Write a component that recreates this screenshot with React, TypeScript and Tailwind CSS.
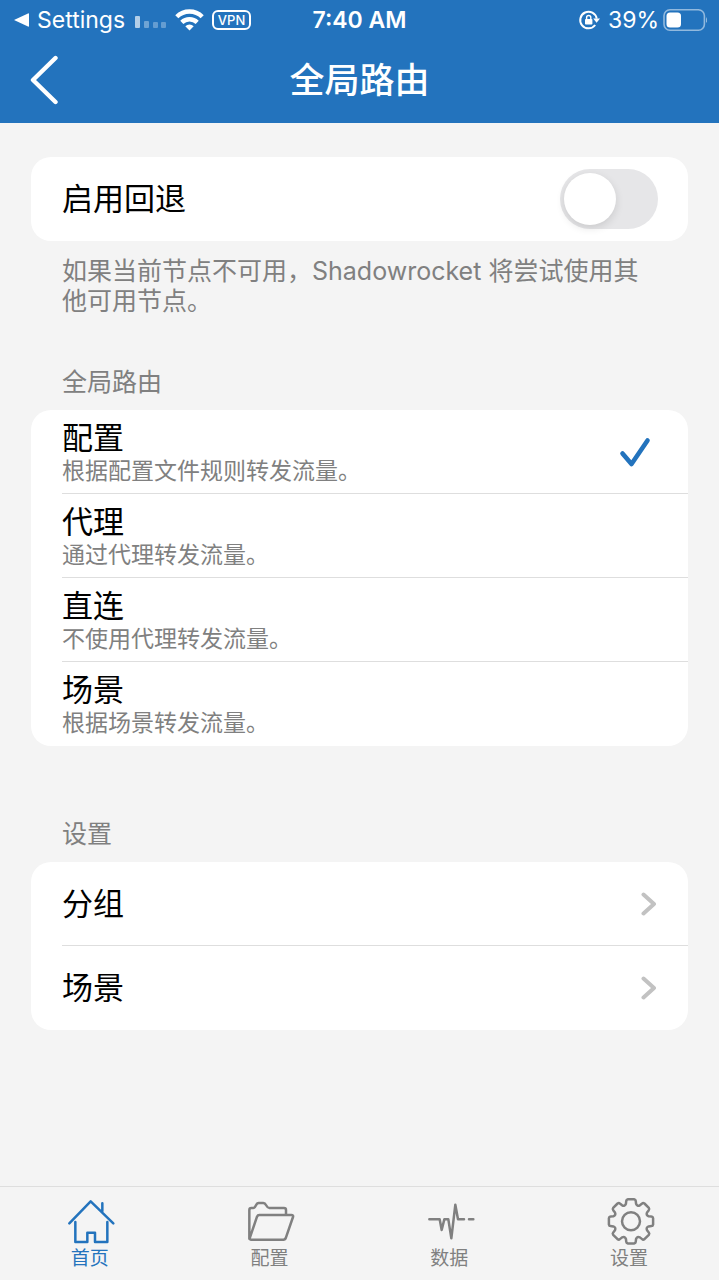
import { useState } from "react";

const MODES = [
	{ id: "config", nombre: "配置", detalle: "根据配置文件规则转发流量。" },
	{ id: "proxy", nombre: "代理", detalle: "通过代理转发流量。" },
	{ id: "direct", nombre: "直连", detalle: "不使用代理转发流量。" },
	{ id: "scene", nombre: "场景", detalle: "根据场景转发流量。" }
];

const LINKS = ["分组", "场景"];

// eight teeth, each a trapezoid with a rounded valley between two of them
function gearPath() {
	const pt = (r: number, deg: number) => {
		const a = (deg * Math.PI) / 180;
		return `${(78 + r * Math.cos(a)).toFixed(1)} ${(76 + r * Math.sin(a)).toFixed(1)}`;
	};
	let d = `M${pt(55, -16)}`;
	for (let i = 0; i < 8; i++) {
		const c = i * 45;
		d += `L${pt(63, c - 13)}Q${pt(67, c - 12)} ${pt(67, c - 8)}L${pt(67, c + 8)}Q${pt(67, c + 12)} ${pt(63, c + 13)}`;
		d += `L${pt(55, c + 16)}Q${pt(48, c + 22.5)} ${pt(55, c + 29)}`;
	}
	return d + "Z";
}

const TABS = [
	{ nombre: "首页", d: "M10 82L74 16L142 82M109 22V46M28 78V138H64V110H87V138H124V78" },
	{
		nombre: "配置",
		d: "M10 128V42Q10 36 16 36H22C31 36 28 21 38 21H52C62 21 60 36 70 36H114Q120 36 120 42V56M40 57H136Q143 57 141 63L120 124Q118 131 112 131H16Q10 131 12 124L33 62Q35 57 40 57Z"
	},
	{ nombre: "数据", d: "M13 70H44L50 102L58 70H70L79 127L91 26L99 70H117M132 70H145" },
	{ nombre: "设置", d: gearPath() + "M105 76A27 27 0 1 1 51 76A27 27 0 1 1 105 76Z" }
];

function StatusBar() {
	return (
		<div className="grid h-10 grid-cols-[1fr_auto_1fr] items-center px-3 text-[23px] leading-[30px]">
			<div className="flex items-center">
				<svg className="mr-2 h-[14px] w-[17px]" viewBox="0 0 17 14" fill="currentColor">
					<path d="M2 7L16 0.4Q17 0 17 1V13Q17 14 16 13.6Z" />
				</svg>
				<span>Settings</span>
				<svg className="ml-[10px] h-[22px] w-8" viewBox="0 0 32 22" fill="currentColor">
					<rect x="0" y="7" width="5" height="12" rx="1" opacity="0.65" />
					<rect x="9" y="12" width="5" height="7" rx="1" opacity="0.35" />
					<rect x="18" y="13" width="5" height="6" rx="1" opacity="0.3" />
					<rect x="26" y="13" width="5" height="6" rx="1" opacity="0.3" />
				</svg>
				<svg className="ml-2 h-[22px] w-[29px]" viewBox="0 0 29 22" fill="none" stroke="currentColor" strokeWidth="4.4">
					<path d="M1.8 7.8A18 18 0 0 1 27.2 7.8" />
					<path d="M6.8 13.4A11 11 0 0 1 22.2 13.4" />
					<path d="M14.5 21.5L10.3 17.3A6 6 0 0 1 18.7 17.3Z" fill="currentColor" stroke="none" />
				</svg>
				<span className="ml-2 flex h-5 w-[39px] items-center justify-center rounded-[6px] border-2 border-current text-[13px] font-medium leading-none">
					VPN
				</span>
			</div>

			<span className="font-semibold">7:40 AM</span>

			<div className="flex items-center justify-end">
				<svg className="mr-2 h-[22px] w-[22px]" viewBox="0 0 22 22" fill="none" stroke="currentColor" strokeWidth="2">
					<path d="M17.2 16A8.3 8.3 0 1 1 18.7 9.6" />
					<path d="M15.2 9.6H22L18.6 13.8Z" fill="currentColor" stroke="none" />
					<rect x="7" y="10" width="7.4" height="5.6" rx="0.8" fill="currentColor" stroke="none" />
					<path d="M8.6 10.4V8.6A2.1 2.1 0 0 1 12.8 8.6V10.4" strokeWidth="1.4" />
				</svg>
				<span>39%</span>
				<svg className="ml-1 h-[22px] w-11" viewBox="0 0 44 22" fill="none">
					<rect x="1" y="0.8" width="40.4" height="20.4" rx="6" stroke="currentColor" strokeWidth="1.6" opacity="0.5" />
					<rect x="3.5" y="3.5" width="14.5" height="15" rx="3.5" fill="currentColor" />
					<path d="M43 8Q45.4 11 43 14Z" fill="currentColor" opacity="0.5" />
				</svg>
			</div>
		</div>
	);
}

export default function App() {
	const [fallback, setFallback] = useState(false);
	const [mode, setMode] = useState("config");
	const [tab, setTab] = useState("首页");

	return (
		<div lang="zh-CN" className="flex min-h-screen flex-col bg-[#f4f4f4] font-['Inter','Noto_Sans_CJK_SC',sans-serif] text-black">

			{/* HEADER */}
			<header className="bg-[#2373bd] text-white">
				<StatusBar />
				<div className="grid h-[83px] grid-cols-[1fr_auto_1fr] items-center pb-[3px]">
					<button type="button" aria-label="返回" className="ml-[28px] flex h-14 w-9 items-center">
						<svg className="h-[50px] w-8" viewBox="0 0 32 50" fill="none" stroke="currentColor" strokeWidth="4.4" strokeLinecap="round" strokeLinejoin="round">
							<path d="M27.5 3L5 25L27.5 47" />
						</svg>
					</button>
					<h1 className="text-[35px] font-medium leading-[42px]">全局路由</h1>
				</div>
			</header>

			<main className="flex-1 px-[31px] pt-[34px] pb-8">

				{/* FALLBACK */}
				<label className="flex h-[84px] items-center justify-between rounded-[20px] bg-white pl-[31px] pr-[30px] text-[31px] leading-[34px]">
					启用回退
					<input
						type="checkbox"
						role="switch"
						checked={fallback}
						onChange={(e) => setFallback(e.target.checked)}
						className="flex h-[60px] w-[98px] appearance-none items-center rounded-full bg-[#e6e6e8] px-1 before:h-[52px] before:w-[52px] before:rounded-full before:bg-white before:shadow-[0_3px_8px_rgba(0,0,0,0.12)] checked:justify-end checked:bg-[#34c759]"
					/>
				</label>
				<p className="mt-[15px] px-[31px] text-[25px] leading-[30px] text-[#808080]">
					如果当前节点不可用，Shadowrocket 将尝试使用其他可用节点。
				</p>

				{/* MODES */}
				<fieldset className="mt-[51px]">
					<legend className="mb-[13px] px-[31px] text-[25px] leading-[30px] text-[#808080]">全局路由</legend>
					<div className="overflow-hidden rounded-[20px] bg-white pl-[31px]">
						{MODES.map((m) => (
							<label
								key={m.id}
								className="relative flex h-[84px] items-center justify-between border-b border-[#dedede] pr-[37px] last:border-b-0"
							>
								<input
									type="radio"
									name="mode"
									className="sr-only"
									checked={mode === m.id}
									onChange={() => setMode(m.id)}
								/>
								<span className="pt-1">
									<span className="block text-[31px] leading-[34px]">{m.nombre}</span>
									<span className="block text-[23px] leading-[32px] text-[#808080]">{m.detalle}</span>
								</span>
								{mode === m.id && (
									<svg className="h-8 w-8 text-[#2373bd]" viewBox="0 0 32 32" fill="none" stroke="currentColor" strokeWidth="4.6" strokeLinecap="round" strokeLinejoin="round">
										<path d="M3.5 17.5L12.5 28L28.5 4.5" />
									</svg>
								)}
							</label>
						))}
					</div>
				</fieldset>

				{/* SETTINGS */}
				<section className="mt-[73px]">
					<h2 className="mb-[13px] px-[31px] text-[25px] leading-[30px] text-[#808080]">设置</h2>
					<div className="overflow-hidden rounded-[20px] bg-white pl-[31px]">
						{LINKS.map((l) => (
							<a
								key={l}
								href="#"
								className="flex h-[84px] items-center justify-between border-b border-[#dedede] pr-[31px] text-[31px] leading-[34px] last:border-b-0"
							>
								{l}
								<svg className="h-6 w-4" viewBox="0 0 16 24" fill="none" stroke="#c2c2c2" strokeWidth="4" strokeLinecap="round" strokeLinejoin="round">
									<path d="M2.5 2.5L13 12L2.5 21.5" />
								</svg>
							</a>
						))}
					</div>
				</section>
			</main>

			{/* TAB BAR */}
			<nav className="grid grid-cols-4 border-t border-[#dedede] pt-[9px] pb-[6px]">
				{TABS.map((t) => (
					<button
						key={t.nombre}
						type="button"
						onClick={() => setTab(t.nombre)}
						className={`flex flex-col items-center text-[19px] leading-[30px] ${tab === t.nombre ? "text-[#2373bd]" : "text-[#808080]"}`}
					>
						<svg className="h-12 w-12 overflow-visible" viewBox="0 0 144 144" fill="none" stroke="currentColor" strokeWidth="7.5" strokeLinecap="round" strokeLinejoin="round">
							<path d={t.d} />
						</svg>
						{t.nombre}
					</button>
				))}
			</nav>
		</div>
	);
}
